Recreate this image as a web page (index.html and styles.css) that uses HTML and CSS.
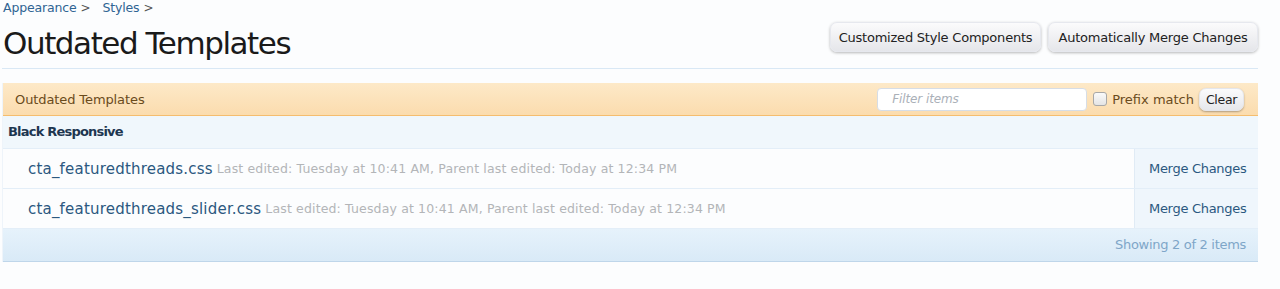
FILE: index.html
```html
<!DOCTYPE html>
<html>
<head>
<meta charset="utf-8">
<link rel="stylesheet" href="styles.css">
</head>
<body>
<div class="page">
  <nav class="crumbs">
    <a class="crumb">Appearance</a><span class="sep">&gt;</span>
    <a class="crumb">Styles</a><span class="sep">&gt;</span>
  </nav>
  <header class="titlebar">
    <h1 class="title">Outdated Templates</h1>
    <div class="topctrl">
      <button class="btn">Customized Style Components</button>
      <button class="btn">Automatically Merge Changes</button>
    </div>
  </header>
  <section class="list">
    <div class="listhead">
      <span class="listtitle">Outdated Templates</span>
      <div class="filter">
        <input class="filterinput" type="text" placeholder="Filter items">
        <label class="prefix"><span class="cbox"></span>Prefix match</label>
        <button class="clear">Clear</button>
      </div>
    </div>
    <div class="group">Black Responsive</div>
    <div class="row">
      <div class="rowmain"><a class="tpl">cta_featuredthreads.css</a><span class="meta">Last edited: Tuesday at 10:41 AM, Parent last edited: Today at 12:34 PM</span></div>
      <a class="merge">Merge Changes</a>
    </div>
    <div class="row">
      <div class="rowmain"><a class="tpl">cta_featuredthreads_slider.css</a><span class="meta">Last edited: Tuesday at 10:41 AM, Parent last edited: Today at 12:34 PM</span></div>
      <a class="merge">Merge Changes</a>
    </div>
    <div class="listfoot">Showing 2 of 2 items</div>
  </section>
</div>
</body>
</html>
```
FILE: styles.css
```css
html, body { margin: 0; padding: 0; }
body {
  background: #fcfdfe;
  font-family: "DejaVu Sans", Verdana, sans-serif;
  color: #222;
  width: 1280px;
  height: 289px;
  overflow: hidden;
}
.page { padding: 0 22px 0 2px; }
.crumbs {
  height: 15px;
  padding-left: 1px;
  font-size: 12.5px;
  letter-spacing: -0.15px;
  line-height: 14px;
  display: flex;
  align-items: center;
}
.crumb { color: #2f6493; }
.sep { color: #555; margin: 0 12px 0 4px; font-size: 12px; }
.titlebar {
  display: flex;
  justify-content: space-between;
  align-items: flex-start;
  border-bottom: 1px solid #d9e8f5;
  height: 53px;
}
.title {
  margin: 9px 0 0 1px;
  font-size: 31px;
  font-weight: normal;
  letter-spacing: -1.45px;
  color: #1a1a1a;
  line-height: 38px;
}
.topctrl { display: flex; gap: 7px; margin-top: 7px; }
.btn {
  font-family: "DejaVu Sans", Verdana, sans-serif;
  font-size: 13px;
  letter-spacing: -0.22px;
  color: #222;
  height: 30px;
  padding: 0;
  border: 1px solid #e6e8ee;
  border-radius: 7px;
  background: linear-gradient(#fbfbfc, #e5e6ea);
  box-shadow: 0 1px 3px rgba(0,0,0,0.28);
}
.btn:first-child { width: 211px; }
.btn:last-child { width: 210px; }
.list { margin-top: 14px; border-left: 1px solid #eef4fa; }
.listhead {
  height: 32px;
  display: flex;
  align-items: center;
  justify-content: space-between;
  background: linear-gradient(#fde9c8, #fbdcae);
  border-bottom: 1px solid #f5bd6e;
  padding: 0 14px 0 12px;
}
.listtitle { color: #6a4b1c; font-size: 13px; letter-spacing: -0.1px; }
.filter { display: flex; align-items: center; }
.filterinput {
  width: 210px;
  height: 23px;
  box-sizing: border-box;
  border: 1px solid #d6dde6;
  border-radius: 4px;
  background: #fff;
  padding: 0 14px;
  font-family: "DejaVu Sans", Verdana, sans-serif;
  font-size: 12px;
  font-style: italic;
  letter-spacing: -0.1px;
}
.filterinput::placeholder { color: #aab0b8; }
.prefix {
  display: flex;
  align-items: center;
  color: #6a4b1c;
  font-size: 13px;
  letter-spacing: 0;
  margin-left: 6px;
}
.cbox {
  width: 12px;
  height: 12px;
  border: 1px solid #a8a8a8;
  border-radius: 3px;
  background: linear-gradient(#fafafa, #e4e4e4);
  margin-right: 5px;
}
.clear {
  margin-left: 5px;
  height: 23px;
  width: 45px;
  padding: 0;
  font-family: "DejaVu Sans", Verdana, sans-serif;
  font-size: 12.5px;
  letter-spacing: -0.3px;
  color: #222;
  border: 1px solid #e4e6ec;
  border-radius: 7px;
  background: linear-gradient(#fbfbfc, #e6e7eb);
  box-shadow: 0 1px 2px rgba(0,0,0,0.3);
}
.group {
  height: 32px;
  line-height: 32px;
  background: #f0f7fc;
  border-bottom: 1px solid #e3eef8;
  padding-left: 5px;
  font-size: 13px;
  font-weight: bold;
  letter-spacing: -0.8px;
  color: #1d3650;
}
.row {
  display: flex;
  height: 39px;
  border-bottom: 1px solid #e3eef8;
  background: #fcfdfe;
}
.rowmain {
  flex: 1;
  display: flex;
  align-items: center;
  padding-left: 25px;
}
.tpl { color: #2b5880; font-size: 15px; letter-spacing: 0.2px; }
.meta { color: #b3b5b8; font-size: 12.5px; letter-spacing: 0.15px; margin-left: 4px; }
.merge {
  width: 124px;
  box-sizing: border-box;
  display: flex;
  align-items: center;
  padding-left: 14px;
  background: #eff6fc;
  border-left: 1px solid #e0ebf5;
  color: #2b5880;
  font-size: 13px;
  letter-spacing: -0.3px;
}
.listfoot {
  height: 32px;
  line-height: 32px;
  text-align: right;
  padding-right: 12px;
  background: linear-gradient(#e6f2fb, #d9eaf7);
  border-bottom: 1px solid #bfd6ea;
  color: #7ea6c8;
  font-size: 13px;
  letter-spacing: -0.3px;
}
```
